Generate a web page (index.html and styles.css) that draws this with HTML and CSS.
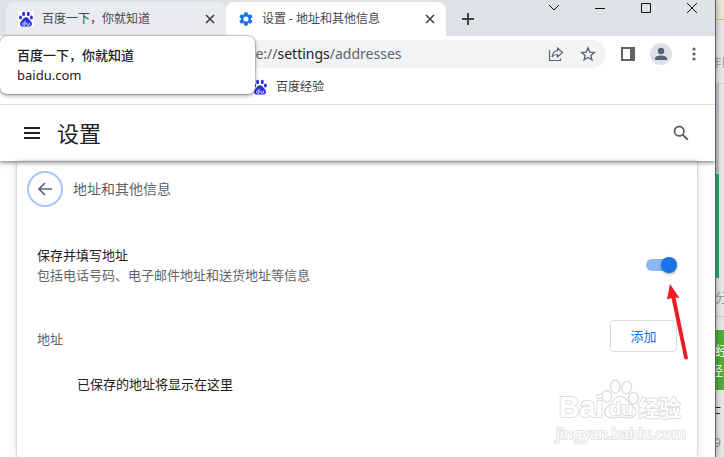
FILE: index.html
```html
<!DOCTYPE html>
<html lang="zh-CN">
<head>
<meta charset="utf-8">
<title>设置 - 地址和其他信息</title>
<link rel="stylesheet" href="styles.css">
</head>
<body>
<svg class="defs" aria-hidden="true">
  <symbol id="paw" viewBox="0 0 16 16">
    <ellipse cx="5.600" cy="2.900" rx="1.500" ry="2.200"/>
    <ellipse cx="10.300" cy="2.900" rx="1.500" ry="2.200"/>
    <ellipse cx="2.500" cy="6.500" rx="1.500" ry="1.900"/>
    <ellipse cx="13.400" cy="6.500" rx="1.500" ry="1.900"/>
    <path d="M8 6.300c-2 0-2.700 1.600-3.800 2.700C3 10.300 1.900 11.500 2.100 13.300c.2 1.800 1.700 2.500 3.200 2.300 1.800-.3 3.600-.3 5.400 0 1.500.2 3-.5 3.200-2.300.2-1.800-.9-3-2.100-4.300C10.700 7.900 10 6.300 8 6.300z"/>
    <path d="M7 9.800v4.400M7 11.800H5.500a1 1 0 0 0-1 1v.4a1 1 0 0 0 1 1H7M8.800 11.600v1.600a1 1 0 0 0 1 1h1.500v-2.600" fill="none" stroke="#fff" stroke-width=".8"/>
  </symbol>
  <symbol id="cross" viewBox="0 0 10 10"><path d="M1 1l8 8M9 1L1 9" fill="none" stroke="currentColor" stroke-width="1.600"/></symbol>
</svg>
<div class="desktop">
  <div class="window">
    <header class="tabstrip">
      <div class="tab">
        <svg class="icon16 paw tile"><use href="#paw"/></svg>
        <span class="tab-title">百度一下，你就知道</span>
        <button class="tab-close" aria-label="关闭标签页"><svg><use href="#cross"/></svg></button>
      </div>
      <div class="tab active">
        <svg class="icon16 gear" viewBox="0 0 24 24"><path d="M19.400 13a7.800 7.800 0 0 0 0-2l2.200-1.700a.6.6 0 0 0 .1-.7l-2-3.500a.5.5 0 0 0-.7-.2l-2.500 1a7.500 7.500 0 0 0-1.700-1L14.400 2.300a.5.500 0 0 0-.5-.4h-4a.5.500 0 0 0-.5.4L9 4.900a7.500 7.500 0 0 0-1.700 1l-2.500-1a.5.500 0 0 0-.6.200l-2 3.500a.5.500 0 0 0 .1.700L4.500 11a7.800 7.800 0 0 0 0 2l-2.200 1.700a.5.500 0 0 0-.1.700l2 3.500c.1.200.4.300.6.200l2.500-1a7.500 7.500 0 0 0 1.700 1l.4 2.600c0 .3.200.4.500.4h4c.3 0 .5-.2.500-.4l.4-2.600a7.500 7.500 0 0 0 1.700-1l2.500 1c.2.100.5 0 .6-.2l2-3.500a.5.500 0 0 0-.1-.7zM12 15.800a3.800 3.800 0 1 1 0-7.600 3.800 3.800 0 0 1 0 7.600z" fill-rule="evenodd"/></svg>
        <span class="tab-title">设置 - 地址和其他信息</span>
        <button class="tab-close" aria-label="关闭标签页"><svg><use href="#cross"/></svg></button>
      </div>
      <button class="new-tab" aria-label="新标签页"><svg viewBox="0 0 12 12"><path d="M6 0v12M0 6h12" stroke="currentColor" stroke-width="2"/></svg></button>
      <div class="window-controls">
        <button aria-label="搜索标签页"><svg viewBox="0 0 12 12"><path d="M1 3l5 5 5-5"/></svg></button>
        <button aria-label="最小化"><svg viewBox="0 0 12 12"><path d="M1 6.500h10"/></svg></button>
        <button aria-label="最大化"><svg viewBox="0 0 12 12"><path d="M1.500 1.500h9v9h-9z"/></svg></button>
        <button aria-label="关闭"><svg viewBox="0 0 12 12"><path d="M1 1l10 10M11 1L1 11"/></svg></button>
      </div>
    </header>
    <div class="toolbar">
      <div class="omnibox">
        <span class="url">chrome://<b>settings</b>/addresses</span>
        <button aria-label="分享"><svg class="icon16" viewBox="0 0 16 16"><path d="M1.500 4v10.500h11v-2M9.500 2l5 4.500-5 4.500V8.500c-2.500 0-4 .5-5.500 2.500C4.500 7.500 6.500 5 9.500 4.500z" fill="none" stroke="#5f6368" stroke-width="1.200"/></svg></button>
        <button aria-label="添加书签"><svg class="icon16" viewBox="0 0 16 16"><path d="M8 2l1.800 4.100 4.400.4-3.300 3 1 4.300-3.900-2.300-3.900 2.300 1-4.300-3.300-3 4.400-.4z" fill="none" stroke="#5f6368" stroke-width="1.400"/></svg></button>
      </div>
      <button class="tool" aria-label="侧边栏"><svg class="icon16" viewBox="0 0 16 16"><path d="M1 1h14v14H1zM3 3v10h7V3z" fill="#5f6368" fill-rule="evenodd"/></svg></button>
      <button class="avatar" aria-label="用户"><svg class="icon16" viewBox="0 0 16 16"><circle cx="8" cy="5" r="3.200"/><path d="M2 14v-1.500C2 10.500 5 9.500 8 9.500s6 1 6 3V14z"/></svg></button>
      <button class="tool" aria-label="菜单"><svg class="icon16" viewBox="0 0 16 16" fill="#5f6368"><circle cx="8" cy="3" r="1.600"/><circle cx="8" cy="8" r="1.600"/><circle cx="8" cy="13" r="1.600"/></svg></button>
    </div>
    <nav class="bookmarks">
      <a href="#"><svg class="icon16 paw"><use href="#paw"/></svg>百度经验</a>
    </nav>
    <div class="settings-bar">
      <button aria-label="主菜单"><svg viewBox="0 0 16 12"><path d="M0 1h16M0 6h16M0 11h16" stroke="#202124" stroke-width="2"/></svg></button>
      <h1>设置</h1>
      <button aria-label="搜索设置"><svg viewBox="0 0 16 16"><circle cx="6.200" cy="6.200" r="4.700" fill="none" stroke="#5f6368" stroke-width="1.800"/><path d="M9.800 9.800l5 5" stroke="#5f6368" stroke-width="2"/></svg></button>
    </div>
    <main class="page">
      <section class="card">
        <div class="heading">
          <button class="back" aria-label="返回"><svg class="icon16" viewBox="0 0 16 16"><path d="M15 8H2.500M8 2L2 8l6 6" fill="none" stroke="#5f6368" stroke-width="1.700"/></svg></button>
          <h2>地址和其他信息</h2>
        </div>
        <div class="row">
          <label for="save">保存并填写地址<small>包括电话号码、电子邮件地址和送货地址等信息</small></label>
          <input class="toggle" type="checkbox" role="switch" id="save" checked>
        </div>
        <div class="row">
          <h3>地址</h3>
          <button class="add">添加</button>
        </div>
        <p class="empty">已保存的地址将显示在这里</p>
      </section>
    </main>
    <aside class="tooltip" role="tooltip"><strong>百度一下，你就知道</strong><span>baidu.com</span></aside>
    <svg class="arrow" viewBox="0 0 26 78" aria-hidden="true"><path d="M5 1L14.500 15 10.500 14.500 22.900 74.400a1.900 1.900 0 0 1-3.700.8L6.500 15 2 16.500z" fill="#ed1c24"/></svg>
    <div class="watermark">
      <svg viewBox="0 0 132 48" role="img" aria-label="Baidu 经验">
        <g fill="#fff" stroke="#dedede" stroke-width="1.500">
          <ellipse cx="60" cy="9" rx="5" ry="7"/><ellipse cx="72" cy="10" rx="5" ry="6.500" transform="rotate(12 72 10)"/>
          <ellipse cx="51" cy="19" rx="5" ry="6" transform="rotate(-12 51 19)"/><ellipse cx="79" cy="21" rx="5" ry="6"/>
          <path d="M65 19c-6 0-7 6-11 9-5 4-7 8-3 12 4 3 9 1 14 1s11 2 15-1c4-4 1-8-3-12-4-3-6-9-12-9z"/>
          <g class="mark-text"><text x="1" y="41" font-size="30">Bai</text><text x="54" y="39" font-size="20">du</text><text x="84" y="40" font-size="22">经验</text></g>
        </g>
      </svg>
      <span>jingyan.baidu.com</span>
    </div>
  </div>
  <aside class="behind">
    <div class="strip cream"></div>
    <div class="strip date"><span>昨日</span></div>
    <div class="strip chart"></div>
    <div class="strip green"></div>
    <div class="strip share"><span>分</span></div>
    <div class="strip promo"><span>经</span><span>经验</span></div>
    <div class="strip stats"><span>士</span><span class="number">9</span></div>
  </aside>
</div>
</body>
</html>
```
FILE: styles.css
```css
* { box-sizing: border-box; }
body {
  margin: 0;
  color: #202124;
  font: 13px/20px "Noto Sans", "Noto Sans CJK SC", sans-serif;
}
button {
  display: flex;
  align-items: center;
  justify-content: center;
  padding: 0;
  border: 0;
  background: none;
  color: inherit;
  font: inherit;
}
h1, h2, h3, p { margin: 0; font-weight: 400; }
.defs { display: none; }
.icon16 { width: 16px; height: 16px; flex: none; }
.paw { fill: #2932e1; }
.gear { fill: #1a73e8; }
.tile { background: #fff; }

.desktop {
  display: grid;
  grid-template-columns: minmax(0, 1fr) 8px;
  min-height: 100vh;
  overflow: hidden;
}
.window {
  position: relative;
  z-index: 1;
  display: flex;
  flex-direction: column;
  background: #fff;
  border-right: 1px solid #606468;
  box-shadow: 0 0 6px rgba(0, 0, 0, .4);
}

.tabstrip {
  display: flex;
  height: 36px;
  padding: 2px 0 0 6px;
  background: #dee1e6;
}
.tab {
  display: flex;
  align-items: center;
  flex: 0 1 220px;
  gap: 8px;
  padding: 0 11px 0 12px;
  border-radius: 8px 8px 0 0;
  background: #e9ebef;
  color: #45484c;
  font-size: 12px;
}
.tab.active { background: #fff; }
.tab-title { flex: 1; white-space: nowrap; }
.tab-close svg { width: 10px; height: 10px; color: #3c4043; }
.new-tab { width: 44px; color: #3c4043; }
.new-tab svg { width: 12px; height: 12px; }
.window-controls { display: flex; margin-left: auto; height: 12px; }
.window-controls button { width: 46px; }
.window-controls svg { width: 12px; height: 12px; fill: none; stroke: #111; }

.toolbar {
  display: flex;
  align-items: center;
  gap: 12px;
  height: 36px;
  padding: 0 11px 0 100px;
}
.omnibox {
  display: flex;
  align-items: center;
  flex: 1;
  gap: 16px;
  height: 28px;
  padding: 0 10px 0 113px;
  border-radius: 14px;
  background: #f1f3f4;
}
.url { flex: 1; color: #5f6368; font-size: 14px; }
.url b { color: #202124; font-weight: 400; }
.tool { width: 20px; }
.avatar { width: 22px; height: 22px; border-radius: 50%; background: #dee1e6; fill: #56617a; }

.bookmarks {
  display: flex;
  align-items: center;
  height: 33px;
  padding: 0 252px 3px;
  border-bottom: 1px solid #dadce0;
  font-size: 12px;
}
.bookmarks a { display: flex; align-items: center; gap: 8px; color: #3c4043; text-decoration: none; white-space: nowrap; }

.settings-bar {
  position: relative;
  display: flex;
  align-items: center;
  gap: 17px;
  height: 56px;
  padding: 0 26px 0 24px;
  box-shadow: 0 1px 5px rgba(0, 0, 0, .6);
  clip-path: inset(0 0 -8px);
}
.settings-bar h1 { flex: 1; font-size: 22px; line-height: 32px; }
.settings-bar svg { width: 16px; }

.page { display: flex; flex: 1; padding: 0 18px 0 17px; background: #fff; }
.card {
  flex: 1;
  padding: 10px 20px 16px;
  background: #fff;
  box-shadow: 0 0 2px rgba(60, 64, 67, .4), 0 2px 10px rgba(60, 64, 67, .15);
}
.heading { display: flex; align-items: center; gap: 10px; margin: 0 0 22px -10px; }
.heading h2 { color: #5f6368; font-size: 14px; }
.back { width: 36px; height: 36px; border: 2px solid #a8c7fa; border-radius: 50%; }
.row { display: flex; align-items: center; justify-content: space-between; min-height: 71px; }
.row small { display: block; color: #5f6368; font-size: 13px; }
.row h3 { padding-top: 6px; color: #5f6368; font-size: 13px; }
.toggle {
  position: relative;
  appearance: none;
  width: 30px;
  height: 12px;
  margin: 0 1px;
  border-radius: 6px;
  background: #8cb5f5;
}
.toggle::after {
  content: "";
  position: absolute;
  top: -2px;
  right: -1px;
  width: 16px;
  height: 16px;
  border-radius: 50%;
  background: #1a73e8;
  box-shadow: 0 1px 3px rgba(0, 0, 0, .4);
}
.add { width: 67px; height: 32px; border: 1px solid #dadce0; border-radius: 4px; color: #1a73e8; }
.empty { padding: 3px 0 0 40px; }

.tooltip {
  position: absolute;
  top: 36px;
  left: 0;
  display: flex;
  flex-direction: column;
  width: 255px;
  padding: 9px 17px;
  border-radius: 7px;
  background: #fff;
  box-shadow: 0 0 2px rgba(0, 0, 0, .6), 0 2px 4px rgba(0, 0, 0, .3);
}
.tooltip strong { font-weight: 500; }
.arrow { position: absolute; top: 283px; right: 24px; width: 26px; height: 78px; }
.watermark { position: absolute; right: 28px; bottom: 15px; width: 132px; }
.watermark svg { display: block; width: 132px; height: 46px; }
.mark-text {
  font-family: "Liberation Sans", "Noto Sans CJK SC", sans-serif;
  font-weight: 700;
  paint-order: stroke;
  stroke-width: 2px;
}
.watermark span {
  display: block;
  color: #fff;
  font-size: 15px;
  line-height: 18px;
  text-align: center;
  -webkit-text-stroke: 2px #e2e2e2;
  paint-order: stroke;
}

.behind { display: flex; flex-direction: column; background: #e6e6e6; }
.strip { display: flex; flex-direction: column; align-items: flex-end; justify-content: center; }
.cream { height: 20px; border-bottom: 1px solid #d8bd93; background: #ebe6d2; }
.date { height: 64px; padding-top: 22px; border-bottom: 1px solid #d5d5d5; color: #8b9bb0; }
.date span { margin-right: -9px; white-space: nowrap; font-size: 12px; }
.chart { height: 90px; margin-right: 5px; background: #c6cbd1; }
.green { height: 104px; border-right: 5px solid #e6e6e6; background: #27ae74; }
.share { height: 39px; border-bottom: 1px solid #ccc; color: #999; }
.share span { margin-right: -4px; }
.promo { height: 60px; margin-top: 13px; background: #4caf36; color: #fff; }
.promo span { margin-right: -4px; white-space: nowrap; }
.promo span + span { margin-right: -12px; }
.stats { flex: 1; justify-content: flex-start; gap: 14px; padding-top: 8px; }
.stats span { margin-right: 3px; }
.stats .number { color: #999; }
```
